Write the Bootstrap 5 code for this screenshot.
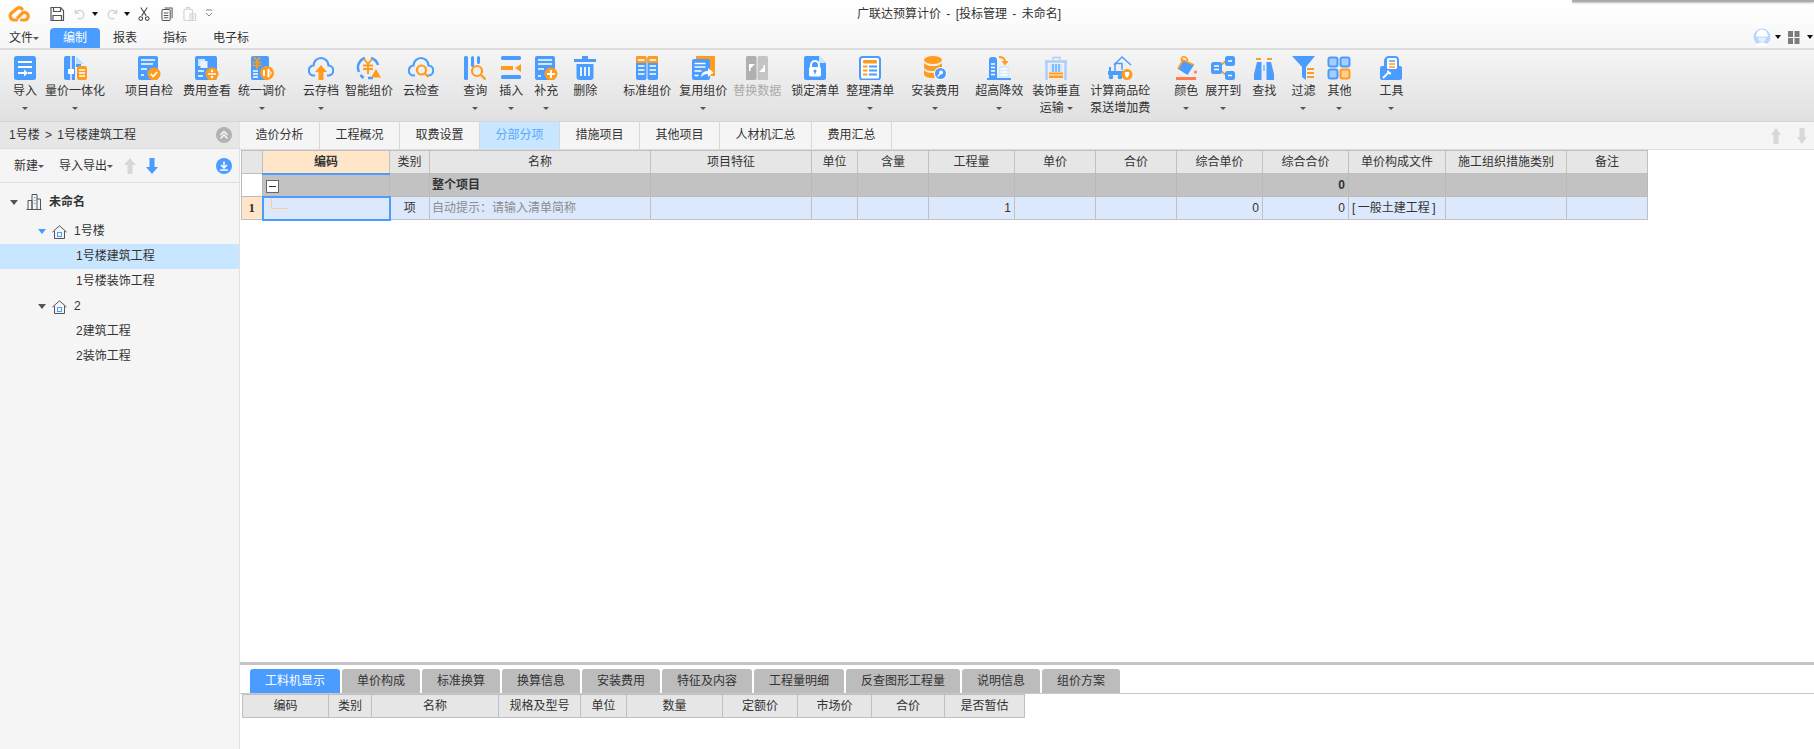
<!DOCTYPE html>
<html lang="zh-CN">
<head>
<meta charset="UTF-8">
<title>广联达预算计价</title>
<link rel="stylesheet" href="https://cdn.jsdelivr.net/npm/bootstrap@5.3.0/dist/css/bootstrap.min.css">
<style>
    html, body { height: 100%; overflow: hidden; }
    body { font-family: "Liberation Sans", "Noto Sans CJK SC", sans-serif; font-size: 12px; color: #333; background: #fff; line-height: 1.2; }
    svg { display: block; flex: none; }

    /* title + menu */
    .app-top { height: 48px; background: linear-gradient(#fff, #f6f6f6); position: relative; }
    .qat-row { height: 28px; display: grid; grid-template-columns: 857px 1fr; align-items: center; }
    .qat { padding-left: 8px; }
    .qat .logo { margin-right: 19px; }
    .app-title { color: #333; font-size: 12px; word-spacing: 2px; }
    .menu-row { height: 20px; padding-left: 9px; }
    .menu-item { height: 20px; line-height: 20px; color: #333; }
    .menu-item.on { width: 50px; margin-left: 11px; margin-right: 13px; text-align: center; background: #4a9cff; color: #fff; border-radius: 4px 4px 0 0; }
    .menu-gap { margin-right: 26px; }
    .tri { display: inline-block; width: 0; height: 0; border-left: 3px solid transparent; border-right: 3px solid transparent; border-top: 3px solid #555; vertical-align: middle; }
    .tri.dark { border-top: 4px solid #111; }
    .top-shadow { position: absolute; right: 0; top: 0; width: 242px; height: 2px; background: #aaa; box-shadow: 0 1px 2px #bbb; }
    .user-tools { position: absolute; right: 0; top: 28px; height: 18px; padding-right: 1px; }

    /* ribbon */
    .ribbon { height: 74px; padding-left: 13px; border-top: 2px solid #dcdcdc; border-bottom: 1px solid #d4d4d4; background: linear-gradient(#f5f5f5, #e0e0e0); }
    .rb-item { padding-top: 6px; text-align: center; color: #333; white-space: nowrap; }
    .rb-item svg { margin: 0 auto; }
    .rb-text { height: 18px; line-height: 18px; margin-top: 2px; }
    .rb-sub { height: 16px; line-height: 16px; }
    .rb-off { color: #aaa; }
    .g6 { margin-left: 6px; } .g7 { margin-left: 7px; } .g8 { margin-left: 8px; } .g9 { margin-left: 9px; }
    .g10 { margin-left: 10px; } .g11 { margin-left: 11px; } .g12 { margin-left: 12px; } .g15 { margin-left: 15px; }
    .g16 { margin-left: 16px; } .g17 { margin-left: 17px; } .g20 { margin-left: 20px; } .g24 { margin-left: 24px; }
    .g26 { margin-left: 26px; } .g28 { margin-left: 28px; }

    /* side tree */
    .side { width: 240px; flex: none; background: #f5f5f5; border-right: 1px solid #e2e2e2; }
    .path-bar { height: 27px; padding: 0 7px 0 9px; background: #e6e6e6; border-bottom: 1px solid #dcdcdc; word-spacing: 2px; }
    .side-tools { height: 33px; padding: 0 7px 0 14px; border-bottom: 1px solid #dedede; margin-top: 1px; }
    .tree-box { padding-top: 6px; }
    .tree-row { height: 25px; padding-left: 76px; }
    .tree-row.head { height: 26px; margin-bottom: 4px; padding-left: 10px; font-weight: 700; }
    .tree-row.floor { padding-left: 38px; }
    .tree-row.sel { background: #c8e6ff; }
    .tree-arrow { width: 0; height: 0; border-left: 4px solid transparent; border-right: 4px solid transparent; border-top: 5px solid #555; }
    .tree-arrow.blue { border-top-color: #4a9cff; }

    /* main */
    .work { min-width: 0; background: #fff; }
    .cost-tabs { height: 28px; background: #f5f5f5; border-bottom: 1px solid #dcdcdc; flex-wrap: nowrap; }
    .cost-tabs .nav-link { width: 80px; height: 27px; padding: 0; line-height: 27px; text-align: center; color: #333; border-right: 1px solid #d8d8d8; }
    .cost-tabs .nav-link.wide { width: 92px; }
    .cost-tabs .nav-link.active { background: #c8e6ff; color: #5aa9ff; }
    .tab-arrows { padding-right: 7px; }
    .grid-wrap { padding: 0 0 0 1px; }
    .sheet { table-layout: fixed; border-collapse: collapse; margin: 0; font-size: 12px; color: #333; border-color: #c0c0c0; }
    .sheet > :not(caption) > * > * { padding: 0 3px; height: 23px; line-height: 20px; border: 1px solid #c0c0c0; color: #333; white-space: nowrap; overflow: hidden; vertical-align: middle; }
    .sheet thead > tr > * { font-weight: 400; text-align: center; }
    .sheet thead { --bs-table-bg: #e6e6e6; }
    .sheet thead > tr > .hd-on { --bs-table-bg: #ffe6c8; font-weight: 700; border-bottom: 2px solid #4a9cff; padding-top: 1px; line-height: 19px; }
    .sheet .row-group { --bs-table-bg: #c2c2c2; font-weight: 700; }
    .sheet .row-group td { border-color: #bababa; }
    .sheet .row-item { --bs-table-bg: #dce9fc; }
    .sheet .row-blank { --bs-table-bg: #fff; }
    .sheet .row-no { --bs-table-bg: #ffe6c8; font-family: "Liberation Serif", serif; font-weight: 700; text-align: center; font-size: 13px; }
    .sheet .cell-on { position: relative; border: 2px solid #4a9cff; padding: 0; }
    .sheet .hint { color: #8c8c8c; }
    .sheet .cell-name { padding-left: 2px; }
    .sheet-top { width: 1405px; }
    .sheet-top col:nth-child(1) { width: 21px; }  .sheet-top col:nth-child(2) { width: 127px; }
    .sheet-top col:nth-child(3) { width: 40px; }  .sheet-top col:nth-child(4) { width: 221px; }
    .sheet-top col:nth-child(5) { width: 161px; } .sheet-top col:nth-child(6) { width: 46px; }
    .sheet-top col:nth-child(7) { width: 71px; }  .sheet-top col:nth-child(8) { width: 86px; }
    .sheet-top col:nth-child(9) { width: 81px; }  .sheet-top col:nth-child(10) { width: 81px; }
    .sheet-top col:nth-child(11) { width: 86px; } .sheet-top col:nth-child(12) { width: 86px; }
    .sheet-top col:nth-child(13) { width: 97px; } .sheet-top col:nth-child(14) { width: 121px; }
    .sheet-top col:nth-child(15) { width: 81px; }
    .fold-box { position: absolute; left: 3px; top: 5px; width: 13px; height: 13px; border: 1px solid #666; background: #fff; }
    .fold-box::after { content: ""; position: absolute; left: 2px; right: 2px; top: 5px; height: 1px; background: #333; }
    .sheet .row-group .fold-cell { position: relative; overflow: visible; }
    .fold-line { position: absolute; left: 7px; top: -1px; width: 17px; height: 12px; border-left: 1px solid #f8cf96; border-bottom: 1px solid #f8cf96; }

    /* bottom panel */
    .low-pane { height: 87px; flex: none; border-top: 3px solid #c4c4c4; }
    .low-tabs { height: 24px; padding: 4px 0 0 10px; gap: 2px; flex-wrap: nowrap; border-bottom: 1px solid #c8c8c8; box-sizing: content-box; }
    .low-tabs .nav-link { height: 24px; padding: 0; line-height: 24px; text-align: center; color: #333; background: #bcbcbc; border-radius: 3px 3px 0 0; }
    .low-tabs .nav-link.active { background: #4a9cff; color: #fff; }
    .lt78 { width: 78px; } .lt90 { width: 90px; } .lt114 { width: 114px; }
    .low-grid { padding-left: 2px; }
    .sheet-low { width: 782px; }
    .sheet-low col:nth-child(1) { width: 86px; }  .sheet-low col:nth-child(2) { width: 43px; }
    .sheet-low col:nth-child(3) { width: 127px; } .sheet-low col:nth-child(4) { width: 82px; }
    .sheet-low col:nth-child(5) { width: 46px; }  .sheet-low col:nth-child(6) { width: 96px; }
    .sheet-low col:nth-child(7) { width: 75px; }  .sheet-low col:nth-child(8) { width: 74px; }
    .sheet-low col:nth-child(9) { width: 73px; }  .sheet-low col:nth-child(10) { width: 80px; }
</style>
</head>
<body class="d-flex flex-column vh-100">

<header class="app-top">
    <div class="top-shadow"></div>
    <div class="qat-row">
        <div class="qat d-flex align-items-center">
            <!-- logo -->
            <svg class="logo" width="22" height="16" viewBox="0 0 22 16" fill="none" stroke="#ff9c1f" stroke-width="3.200" stroke-linecap="round" stroke-linejoin="round"><path d="M8.500 14H6A4 4 0 0 1 4.200 6.500L9 2.500C11 1 13 1.500 14 3"/><path d="M10 11.500L15 6.500A3.600 3.600 0 0 1 17.500 14H13.500"/></svg>
            <svg width="16" height="16" viewBox="0 0 16 16" fill="none" stroke="#555" stroke-width="1.200"><path d="M2 1.500h9.500l3 3v10H2z"/><path d="M4.500 1.500v4h7v-4M4 14.500v-5h8.500v5"/></svg>
            <svg class="g9" width="11" height="14" viewBox="0 0 13 14" fill="none" stroke="#ccc" stroke-width="1.300"><path d="M1.500 2v4h4M2 6a5 5 0 1 1 2 6"/></svg>
            <span class="tri dark g7"></span>
            <svg class="g9" width="11" height="14" viewBox="0 0 13 14" fill="none" stroke="#ccc" stroke-width="1.300"><path d="M11.500 2v4h-4M11 6a5 5 0 1 0-2 6"/></svg>
            <span class="tri dark g6"></span>
            <svg class="g8" width="12" height="16" viewBox="0 0 13 16" fill="none" stroke="#444" stroke-width="1.100"><path d="M3 1l6 9M10 1l-6 9"/><circle cx="3" cy="13" r="2"/><circle cx="10" cy="13" r="2"/></svg>
            <svg class="g11" width="12" height="16" viewBox="0 0 13 16" fill="none" stroke="#555" stroke-width="1.100"><path d="M4 1.500h8v11"/><rect x="1" y="3" width="9" height="12" rx="1.500"/><path d="M3 7h5M3 9.500h5M3 12h5"/></svg>
            <svg class="g10" width="14" height="16" viewBox="0 0 15 16" fill="none" stroke="#d0d0d0" stroke-width="1.100"><rect x="1" y="3" width="9" height="12" rx="1"/><path d="M4 3V1h3v2"/><rect x="7.500" y="8" width="6" height="7"/><path d="M9 10.500h3M9 12.500h3"/></svg>
            <svg class="g8" width="8" height="10" viewBox="0 0 8 10" fill="none" stroke="#888"><path d="M1 1h6M1 4l3 3 3-3"/></svg>
        </div>
        <div class="app-title">广联达预算计价 - [投标管理 - 未命名]</div>
    </div>
    <div class="menu-row d-flex align-items-center">
        <div class="menu-item">文件<span class="tri ms-0"></span></div>
        <div class="menu-item on">编制</div>
        <div class="menu-item menu-gap">报表</div>
        <div class="menu-item menu-gap">指标</div>
        <div class="menu-item">电子标</div>
    </div>
    <div class="user-tools d-flex align-items-center">
        <svg width="18" height="18" viewBox="0 0 18 18"><circle cx="9" cy="9" r="8.500" fill="#b6d8fb"/><path d="M3.500 7a5.500 5.500 0 0 1 11 0z" fill="#fff"/><rect x="3" y="7" width="12" height="1.500" fill="#fff"/><path d="M5 9.500h8c0 3-1.500 4.500-4 4.500S5 12.500 5 9.500z" fill="#e3f0fe"/><path d="M3 18c1-3 3-3.500 6-3.500S14 15 15 18z" fill="#fff"/></svg>
        <span class="tri dark ms-1"></span>
        <svg class="g7" width="12" height="13" viewBox="0 0 12 13" fill="#7c7c7c"><rect width="5" height="6"/><rect x="6.500" width="5" height="6"/><rect y="7" width="5" height="6"/><rect x="6.500" y="7" width="5" height="6"/></svg>
        <span class="tri dark g7"></span>
    </div>
</header>

<section class="ribbon d-flex flex-nowrap">
    <div class="rb-item">
        <svg width="24" height="24" viewBox="0 0 24 24"><rect x="1" width="22" height="24" rx="2.500" fill="#4a9cff"/><path d="M5 6h14M5 11h14" stroke="#fff" stroke-width="2"/><path d="M15 17h4" stroke="#fff" stroke-width="2"/><path d="M5 16h6v-2.500l4 3.500-4 3.500V18H5z" fill="#fff"/></svg>
        <div class="rb-text">导入</div><div class="rb-sub"><span class="tri"></span></div>
    </div>
    <div class="rb-item g8">
        <svg width="24" height="24" viewBox="0 0 24 24"><path d="M3 0h9v24H3a2 2 0 0 1-2-2V2a2 2 0 0 1 2-2z" fill="#4a9cff"/><path d="M13 0l8 8h-8z" fill="#bddcff"/><path d="M13 8h5v3h-5z" fill="#4a9cff"/><path d="M8 0v24" stroke="#fff" stroke-width="1.400"/><rect x="5" y="13" width="6" height="5" fill="#fff"/><rect x="14" y="10" width="10" height="14" rx="2" fill="#ff9c1f"/><path d="M16 14h6M16 17h6M16 20h6" stroke="#fff" stroke-width="1.500"/></svg>
        <div class="rb-text">量价一体化</div><div class="rb-sub"><span class="tri"></span></div>
    </div>
    <div class="rb-item g20">
        <svg width="24" height="24" viewBox="0 0 24 24"><rect x="1" width="20" height="24" rx="2" fill="#4a9cff"/><path d="M4 4h14M4 8h12M4 13h6M4 19h3" stroke="#fff" stroke-width="1.500"/><circle cx="17" cy="18" r="6.500" fill="#ff9c1f"/><path d="M13.800 18l2.300 2.500 4-4.500" fill="none" stroke="#fff" stroke-width="1.700"/></svg>
        <div class="rb-text">项目自检</div>
    </div>
    <div class="rb-item g10">
        <svg width="24" height="24" viewBox="0 0 24 24"><rect x="0" width="22" height="24" rx="2" fill="#4a9cff"/><rect x="3" y="3" width="7" height="7" fill="#cfe4ff"/><rect x="5.500" y="5" width="7" height="7" fill="#e9f3ff"/><path d="M3 15h6M3 20h5" stroke="#fff" stroke-width="1.600"/><circle cx="17" cy="18" r="6.500" fill="#ff9c1f"/><path d="M13 18h8" stroke="#fff" stroke-width="1.500"/><circle cx="17" cy="15" r="1.200" fill="#fff"/><circle cx="17" cy="21" r="1.200" fill="#fff"/></svg>
        <div class="rb-text">费用查看</div>
    </div>
    <div class="rb-item g7">
        <svg width="24" height="24" viewBox="0 0 24 24"><rect x="1" width="18" height="24" rx="2" fill="#4a9cff"/><path d="M4 1l3 4 3-4M2.500 6.500h9M2.500 9.500h9M7 5v8" fill="none" stroke="#ff9c1f" stroke-width="1.700"/><path d="M3 15h5M3 18h5M3 21h5" stroke="#fff" stroke-width="1.300"/><circle cx="17" cy="17" r="7" fill="#ff9c1f"/><path d="M14 14v6" stroke="#fff" stroke-width="2"/><path d="M18.500 12.800v8.400" stroke="#fff" stroke-width="2"/><path d="M13 17l2-2M13 17l2 2M21.500 17l-2-2M21.500 17l-2 2" stroke="#fff"/></svg>
        <div class="rb-text">统一调价</div><div class="rb-sub"><span class="tri"></span></div>
    </div>
    <div class="rb-item g17">
        <svg width="26" height="24" viewBox="0 0 26 24" fill="none"><path d="M7 19.500H6A5 5 0 0 1 5.500 9.500 7.500 7.500 0 0 1 20.500 9.500 5 5 0 0 1 20 19.500H19" stroke="#4a9cff" stroke-width="2.200"/><path d="M13 9l6 7h-3.500v8h-5v-8H7z" fill="#ff9c1f"/></svg>
        <div class="rb-text">云存档</div><div class="rb-sub"><span class="tri"></span></div>
    </div>
    <div class="rb-item g6">
        <svg width="26" height="24" viewBox="0 0 26 24" fill="none"><path d="M3 16A10 10 0 0 1 9 2M4.500 19l3 3" stroke="#4a9cff" stroke-width="2.500"/><path d="M15 2a10 10 0 0 1 7 7M17 22h-5" stroke="#4a9cff" stroke-width="2.500"/><path d="M8 3l4 5 4-5M7 9.500h10M7 13h10M12 7v11" stroke="#ff9c1f" stroke-width="2"/><path d="M20 13l5 8.500H15z" fill="#ff9c1f"/></svg>
        <div class="rb-text">智能组价</div>
    </div>
    <div class="rb-item g10">
        <svg width="26" height="24" viewBox="0 0 26 24" fill="none"><path d="M7 19.500H6A5 5 0 0 1 5.500 9.500 7.500 7.500 0 0 1 20.500 9.500 5 5 0 0 1 20 19.500" stroke="#4a9cff" stroke-width="2.200"/><circle cx="13.500" cy="14" r="4.500" stroke="#ff9c1f" stroke-width="2.200"/><path d="M17 17.500l3.500 3.500" stroke="#ff9c1f" stroke-width="2.400"/></svg>
        <div class="rb-text">云检查</div>
    </div>
    <div class="rb-item g24">
        <svg width="24" height="24" viewBox="0 0 24 24" fill="none"><rect x="1" width="4" height="24" rx="1.500" fill="#4a9cff"/><path d="M8 1.500a1.500 1.500 0 0 1 3 0v8a1.500 1.500 0 0 1-3 0zM14 1.500a1.500 1.500 0 0 1 3 0v5a1.500 1.500 0 0 1-3 0z" fill="#4a9cff"/><circle cx="14" cy="15" r="5" stroke="#ff9c1f" stroke-width="2.200"/><path d="M18 19l4.500 4.500" stroke="#ff9c1f" stroke-width="2.400"/></svg>
        <div class="rb-text">查询</div><div class="rb-sub"><span class="tri"></span></div>
    </div>
    <div class="rb-item g12">
        <svg width="24" height="24" viewBox="0 0 24 24"><rect x="2" width="20" height="4" rx="1.500" fill="#4a9cff"/><rect x="2" y="10" width="12" height="4" fill="#ff9c1f"/><path d="M22 8v8l-6-4z" fill="#ff9c1f"/><rect x="2" y="19" width="20" height="4" rx="1.500" fill="#4a9cff"/></svg>
        <div class="rb-text">插入</div><div class="rb-sub"><span class="tri"></span></div>
    </div>
    <div class="rb-item g11">
        <svg width="24" height="24" viewBox="0 0 24 24"><rect x="1" width="20" height="24" rx="2" fill="#4a9cff"/><path d="M4 4h14M4 8h14M4 13h6M4 20h3" stroke="#fff" stroke-width="1.500"/><circle cx="17" cy="18" r="6.500" fill="#ff9c1f"/><path d="M13 18h8M17 14v8" stroke="#fff" stroke-width="2"/></svg>
        <div class="rb-text">补充</div><div class="rb-sub"><span class="tri"></span></div>
    </div>
    <div class="rb-item g15">
        <svg width="24" height="24" viewBox="0 0 24 24"><path d="M1 3h22v3H1z" fill="#4a9cff"/><path d="M9 0h6v3H9z" fill="#4a9cff"/><path d="M3.500 8h17v13a3 3 0 0 1-3 3h-11a3 3 0 0 1-3-3z" fill="#4a9cff"/><path d="M8 11v9M12 11v9M16 11v9" stroke="#fff" stroke-width="1.700"/></svg>
        <div class="rb-text">删除</div>
    </div>
    <div class="rb-item g26">
        <svg width="24" height="24" viewBox="0 0 24 24"><rect x="1" width="10.500" height="24" rx="2" fill="#4a9cff"/><rect x="12.500" width="10.500" height="24" rx="2" fill="#4a9cff"/><path d="M3 0h6.500a2 2 0 0 1 2 2v5H1V2a2 2 0 0 1 2-2zM14.500 0H21a2 2 0 0 1 2 2v5H12.500V2a2 2 0 0 1 2-2z" fill="#ff9c1f"/><path d="M3 4h6.500M14.500 4H21M3 10h6.500M14.500 10H21M3 14h6.500M14.500 14H21M3 18h6.500M14.500 18H21" stroke="#fff" stroke-width="1.500"/></svg>
        <div class="rb-text">标准组价</div>
    </div>
    <div class="rb-item g8">
        <svg width="24" height="24" viewBox="0 0 24 24"><path d="M5 0h19v20H19V5H5z" fill="#ff9c1f"/><rect x="1" y="3" width="18" height="21" rx="2" fill="#4a9cff"/><path d="M3.500 7.500h11M3.500 11h11M3.500 15h7M3.500 19.500h4" stroke="#fff" stroke-width="1.300"/><path d="M10 21c.5-4 3-6 7-6v-3l5.500 4.500-5.500 4.500v-3c-3 0-5 1-7 3z" fill="#fff"/></svg>
        <div class="rb-text">复用组价</div><div class="rb-sub"><span class="tri"></span></div>
    </div>
    <div class="rb-item rb-off g6">
        <svg width="24" height="24" viewBox="0 0 24 24"><rect x="1" width="10.500" height="24" rx="1.500" fill="#b0b0b0"/><rect x="12.500" width="10.500" height="24" rx="1.500" fill="#c4c4c4"/><path d="M4 15V8h6l-2.500 2.500-2 2V15zM20 9v7h-6l2.500-2.500 2-2V9z" fill="#fff"/></svg>
        <div class="rb-text">替换数据</div>
    </div>
    <div class="rb-item g10">
        <svg width="24" height="24" viewBox="0 0 24 24"><path d="M3 0h13l7 7v15a2 2 0 0 1-2 2H3a2 2 0 0 1-2-2V2a2 2 0 0 1 2-2z" fill="#4a9cff"/><path d="M16 0l7 7h-7z" fill="#cfe4ff"/><path d="M8 12V9a4 4 0 0 1 8 0v3" fill="none" stroke="#fff" stroke-width="2"/><rect x="6" y="11" width="12" height="9.500" rx="1.500" fill="#fff"/><circle cx="12" cy="15" r="1.500" fill="#4a9cff"/><rect x="11.400" y="15" width="1.200" height="3" fill="#4a9cff"/></svg>
        <div class="rb-text">锁定清单</div>
    </div>
    <div class="rb-item g7">
        <svg width="24" height="24" viewBox="0 0 24 24"><rect x="2" y="1" width="20" height="22.500" rx="2.500" fill="#fff" stroke="#4a9cff" stroke-width="2"/><rect x="5" y="4" width="14" height="3.500" rx="1" fill="#ff9c1f"/><path d="M5 10.500h4.500M5 14.500h4.500M5 18.500h4.500" stroke="#ff9c1f" stroke-width="2.200"/><path d="M11 10.500h8M11 14.500h8M11 18.500h8" stroke="#4a9cff" stroke-width="2.200"/></svg>
        <div class="rb-text">整理清单</div><div class="rb-sub"><span class="tri"></span></div>
    </div>
    <div class="rb-item g17">
        <svg width="24" height="24" viewBox="0 0 24 24"><ellipse cx="10" cy="4" rx="9" ry="4" fill="#ff9c1f"/><path d="M1 6c0 2.500 4 4 9 4s9-1.500 9-4v5c0 2.500-4 4-9 4s-9-1.500-9-4z" fill="#ff9c1f"/><path d="M1 13c0 2.500 4 4 9 4 .5 0 1 0 1.500 0V22c-6 .5-10.500-1.500-10.500-4z" fill="#ff9c1f"/><circle cx="17.500" cy="17.500" r="6.500" fill="#fff"/><circle cx="17.500" cy="17.500" r="5.500" fill="#4a9cff"/><circle cx="18" cy="16.500" r="2" fill="#fff"/><path d="M17 18l-2.500 2.500" stroke="#fff" stroke-width="1.500"/></svg>
        <div class="rb-text">安装费用</div><div class="rb-sub"><span class="tri"></span></div>
    </div>
    <div class="rb-item g16">
        <svg width="24" height="24" viewBox="0 0 24 24"><path d="M2 4a3 3 0 0 1 3-3h2a3 3 0 0 1 3 3v18H2z" fill="#4a9cff"/><path d="M4 8h4M4 11.500h4M4 15h4M4 18.500h4" stroke="#fff" stroke-width="1.500"/><rect x="12" y="10" width="10" height="12" fill="#d6e8fd"/><path d="M13.500 13h7M13.500 16h7M13.500 19h7" stroke="#fff" stroke-width="1.400"/><path d="M0 23h24" stroke="#4a9cff" stroke-width="2"/><path d="M12 1c3 0 5.500 1 6 4" fill="none" stroke="#ff9c1f" stroke-width="2"/><path d="M14.500 5h7L18 9.500z" fill="#ff9c1f"/></svg>
        <div class="rb-text">超高降效</div><div class="rb-sub"><span class="tri"></span></div>
    </div>
    <div class="rb-item g9">
        <svg width="24" height="24" viewBox="0 0 24 24" fill="none"><path d="M2.500 24V5M21.500 24V5M1 5.500h22" stroke="#a9cffb" stroke-width="2.400"/><path d="M9 4V1.500h7V4" stroke="#a9cffb" stroke-width="1.400"/><path d="M6 8h12v8H6z" fill="#d5e7fd"/><path d="M9 8v8M12 8v8M15 8v8" stroke="#5aa5ff" stroke-width="1.300"/><path d="M5 16.500h14v5.500H5z" fill="#ff9c1f"/><path d="M5 19h14" stroke="#ffe2bd" stroke-width="1.200"/></svg>
        <div class="rb-text">装饰垂直</div><div class="rb-sub">运输 <span class="tri"></span></div>
    </div>
    <div class="rb-item g10">
        <svg width="26" height="24" viewBox="0 0 26 24" fill="none"><path d="M7 9l8-8 9 8" stroke="#4a9cff" stroke-width="1.400"/><path d="M8 15V7.500h7V14" stroke="#4a9cff" stroke-width="1.500"/><rect x="1" y="15" width="15" height="4" fill="#4a9cff"/><path d="M3 11v4" stroke="#4a9cff" stroke-width="2"/><circle cx="4" cy="21" r="2.300" fill="#4a9cff"/><circle cx="13" cy="21" r="2.300" fill="#4a9cff"/><circle cx="20" cy="18.500" r="5.500" fill="#ff9c1f"/><path d="M17.800 16h4.400v3l-2.200 3-2.200-3z" fill="#fff"/></svg>
        <div class="rb-text">计算商品砼</div><div class="rb-sub">泵送增加费</div>
    </div>
    <div class="rb-item g24">
        <svg width="24" height="24" viewBox="0 0 24 24" fill="none"><path d="M9 4l11 5-6.500 10L4 13z" fill="#4a9cff"/><path d="M4 13L9 4l11 5M8 5C6.500 2.500 8.500 0 11 1c1.500.5 2.500 2 2.500 4" stroke="#ff9c1f" stroke-width="1.700"/><circle cx="21.500" cy="16" r="1.500" fill="#ff7d4d"/><rect x="2" y="21" width="20" height="3" fill="#ff7d4d"/></svg>
        <div class="rb-text">颜色</div><div class="rb-sub"><span class="tri"></span></div>
    </div>
    <div class="rb-item g7">
        <svg width="24" height="24" viewBox="0 0 24 24" fill="none"><path d="M10 9l5-4M10 15l5 4" stroke="#ff9c1f" stroke-width="1.800"/><rect x="0" y="6" width="11" height="12" rx="2.500" fill="#4a9cff"/><path d="M3 10h5M3 13.500h5" stroke="#fff" stroke-width="1.500"/><rect x="14" y="0" width="10" height="10" rx="2.500" fill="#4a9cff"/><path d="M17 5h4" stroke="#fff" stroke-width="1.500"/><rect x="14" y="15" width="10" height="9" rx="2.500" fill="#4a9cff"/><path d="M17 19.500h4" stroke="#fff" stroke-width="1.500"/></svg>
        <div class="rb-text">展开到</div><div class="rb-sub"><span class="tri"></span></div>
    </div>
    <div class="rb-item g11">
        <svg width="24" height="24" viewBox="0 0 24 24"><path d="M5 6h4.500v18H2v-6z" fill="#4a9cff"/><path d="M14.500 6H19l3 12v6h-7.500z" fill="#4a9cff"/><path d="M4 3h5M15 3h5" stroke="#ff9c1f" stroke-width="2"/><path d="M11.500 9h1v6h-1z" fill="#4a9cff"/></svg>
        <div class="rb-text">查找</div>
    </div>
    <div class="rb-item g15">
        <svg width="24" height="24" viewBox="0 0 24 24"><path d="M1 0h23l-9 11v13l-4-3V11z" fill="#4a9cff"/><path d="M16 13h7M16 17h7M16 21h7" stroke="#ff9c1f" stroke-width="2"/></svg>
        <div class="rb-text">过滤</div><div class="rb-sub"><span class="tri"></span></div>
    </div>
    <div class="rb-item g12">
        <svg width="24" height="24" viewBox="0 0 24 24"><rect x="1.500" y="1.500" width="9" height="9" rx="2" fill="#a6cdfc" stroke="#4a9cff" stroke-width="2"/><rect x="13.500" y="1.500" width="9" height="9" rx="2" fill="#a6cdfc" stroke="#4a9cff" stroke-width="2"/><rect x="1.500" y="13.500" width="9" height="9" rx="2" fill="#a6cdfc" stroke="#4a9cff" stroke-width="2"/><rect x="13.500" y="13.500" width="9" height="9" rx="2" fill="#ffcf94" stroke="#ff9c1f" stroke-width="2"/></svg>
        <div class="rb-text">其他</div><div class="rb-sub"><span class="tri"></span></div>
    </div>
    <div class="rb-item g28">
        <svg width="24" height="24" viewBox="0 0 24 24"><path d="M5 10V5a5 5 0 0 1 5-5h6a4 4 0 0 1 4 4v6h1a2 2 0 0 1 2 2v10a2 2 0 0 1-2 2H3a2 2 0 0 1-2-2V12a2 2 0 0 1 2-2z" fill="#4a9cff"/><rect x="8" y="2" width="10" height="11" rx="1.500" fill="#fff"/><path d="M10 5h6" stroke="#4a9cff" stroke-width="1.500"/><path d="M10 8h6M10 11h6" stroke="#ff9c1f" stroke-width="1.500"/><path d="M4 22l6-6M9 14.500a3 3 0 0 0 3 3" fill="none" stroke="#fff" stroke-width="2"/></svg>
        <div class="rb-text">工具</div><div class="rb-sub"><span class="tri"></span></div>
    </div>
</section>

<main class="d-flex flex-grow-1 overflow-hidden">
    <aside class="side d-flex flex-column">
        <div class="path-bar d-flex align-items-center justify-content-between">
            <span>1号楼 &gt; 1号楼建筑工程</span>
            <svg width="16" height="16" viewBox="0 0 16 16" fill="none"><circle cx="8" cy="8" r="8" fill="#b2b2b2"/><path d="M4.500 8L8 4.500 11.500 8M4.500 11.500L8 8l3.500 3.500" stroke="#fff" stroke-width="1.300"/></svg>
        </div>
        <div class="side-tools d-flex align-items-center">
            <span>新建</span><span class="tri ms-0"></span>
            <span class="g15">导入导出</span><span class="tri ms-0"></span>
            <svg class="g11" width="12" height="16" viewBox="0 0 12 16"><path d="M6 0l6 7H8.500v9h-5V7H0z" fill="#d8d8d8"/></svg>
            <svg class="g10" width="12" height="16" viewBox="0 0 12 16"><path d="M3.500 0h5v9H12l-6 7-6-7h3.500z" fill="#4a9cff"/></svg>
            <svg class="ms-auto" width="16" height="16" viewBox="0 0 16 16" fill="none"><circle cx="8" cy="8" r="8" fill="#4a9cff"/><path d="M8 3.500v6M5 7l3 3 3-3M4 12h8" stroke="#fff" stroke-width="1.500"/></svg>
        </div>
        <div class="tree-box">
            <div class="tree-row head d-flex align-items-center">
                <span class="tree-arrow"></span>
                <svg class="g8" width="16" height="16" viewBox="0 0 16 16" fill="none" stroke="#555"><path d="M.5 15.500h15M2 15.500V6.500h4v9M6 15.500V.5h5v15M11 5h3.500v10.500"/><path d="M8 3.500h1.500M8 6.500h1.500M8 9.500h1.500" stroke="#4a9cff"/></svg>
                <span class="g7">未命名</span>
            </div>
            <div class="tree-row floor d-flex align-items-center">
                <span class="tree-arrow blue"></span>
                <svg class="g6" width="15" height="14" viewBox="0 0 15 14" fill="none" stroke="#555"><path d="M.5 7L7.500.8 14.500 7M2.500 6v7.500h10V6"/><rect x="5.500" y="7.500" width="4" height="4" stroke="#4a9cff"/></svg>
                <span class="g7">1号楼</span>
            </div>
            <div class="tree-row sel d-flex align-items-center">1号楼建筑工程</div>
            <div class="tree-row d-flex align-items-center">1号楼装饰工程</div>
            <div class="tree-row floor d-flex align-items-center">
                <span class="tree-arrow"></span>
                <svg class="g6" width="15" height="14" viewBox="0 0 15 14" fill="none" stroke="#555"><path d="M.5 7L7.500.8 14.500 7M2.500 6v7.500h10V6"/><rect x="5.500" y="7.500" width="4" height="4" stroke="#4a9cff"/></svg>
                <span class="g7">2</span>
            </div>
            <div class="tree-row d-flex align-items-center">2建筑工程</div>
            <div class="tree-row d-flex align-items-center">2装饰工程</div>
        </div>
    </aside>

    <div class="work d-flex flex-column flex-grow-1">
        <ul class="nav cost-tabs align-items-center">
            <li class="nav-item"><a class="nav-link" href="#">造价分析</a></li>
            <li class="nav-item"><a class="nav-link" href="#">工程概况</a></li>
            <li class="nav-item"><a class="nav-link" href="#">取费设置</a></li>
            <li class="nav-item"><a class="nav-link active" href="#">分部分项</a></li>
            <li class="nav-item"><a class="nav-link" href="#">措施项目</a></li>
            <li class="nav-item"><a class="nav-link" href="#">其他项目</a></li>
            <li class="nav-item"><a class="nav-link wide" href="#">人材机汇总</a></li>
            <li class="nav-item"><a class="nav-link" href="#">费用汇总</a></li>
            <li class="tab-arrows ms-auto d-flex gap-3">
                <svg width="10" height="16" viewBox="0 0 10 16"><path d="M5 0l5 7H7.500v9h-5V7H0z" fill="#d8d8d8"/></svg>
                <svg width="10" height="16" viewBox="0 0 10 16"><path d="M2.500 0h5v9H10l-5 7-5-7h2.500z" fill="#d8d8d8"/></svg>
            </li>
        </ul>
        <div class="grid-wrap flex-grow-1">
            <table class="table sheet sheet-top">
                <colgroup><col><col><col><col><col><col><col><col><col><col><col><col><col><col><col></colgroup>
                <thead>
                    <tr><th></th><th class="hd-on">编码</th><th>类别</th><th>名称</th><th>项目特征</th><th>单位</th><th>含量</th><th>工程量</th><th>单价</th><th>合价</th><th>综合单价</th><th>综合合价</th><th>单价构成文件</th><th>施工组织措施类别</th><th>备注</th></tr>
                </thead>
                <tbody>
                    <tr class="row-group">
                        <td class="row-blank"></td><td class="fold-cell"><span class="fold-box"></span></td><td></td><td class="cell-name">整个项目</td><td></td><td></td><td></td><td></td><td></td><td></td><td></td><td class="text-end">0</td><td></td><td></td><td></td>
                    </tr>
                    <tr class="row-item">
                        <td class="row-no">1</td><td class="cell-on"><span class="fold-line"></span></td><td class="text-center">项</td><td class="cell-name hint">自动提示：请输入清单简称</td><td></td><td></td><td></td><td class="text-end">1</td><td></td><td></td><td class="text-end">0</td><td class="text-end">0</td><td>[&thinsp;一般土建工程&thinsp;]</td><td></td><td></td>
                    </tr>
                </tbody>
            </table>
        </div>
        <div class="low-pane">
            <ul class="nav low-tabs">
                <li class="nav-item"><a class="nav-link active lt90" href="#">工料机显示</a></li>
                <li class="nav-item"><a class="nav-link lt78" href="#">单价构成</a></li>
                <li class="nav-item"><a class="nav-link lt78" href="#">标准换算</a></li>
                <li class="nav-item"><a class="nav-link lt78" href="#">换算信息</a></li>
                <li class="nav-item"><a class="nav-link lt78" href="#">安装费用</a></li>
                <li class="nav-item"><a class="nav-link lt90" href="#">特征及内容</a></li>
                <li class="nav-item"><a class="nav-link lt90" href="#">工程量明细</a></li>
                <li class="nav-item"><a class="nav-link lt114" href="#">反查图形工程量</a></li>
                <li class="nav-item"><a class="nav-link lt78" href="#">说明信息</a></li>
                <li class="nav-item"><a class="nav-link lt78" href="#">组价方案</a></li>
            </ul>
            <div class="low-grid">
                <table class="table sheet sheet-low">
                    <colgroup><col><col><col><col><col><col><col><col><col><col></colgroup>
                    <thead>
                        <tr><th>编码</th><th>类别</th><th>名称</th><th>规格及型号</th><th>单位</th><th>数量</th><th>定额价</th><th>市场价</th><th>合价</th><th>是否暂估</th></tr>
                    </thead>
                </table>
            </div>
        </div>
    </div>
</main>

<script src="https://cdn.jsdelivr.net/npm/bootstrap@5.3.0/dist/js/bootstrap.bundle.min.js"></script>
</body>
</html>
